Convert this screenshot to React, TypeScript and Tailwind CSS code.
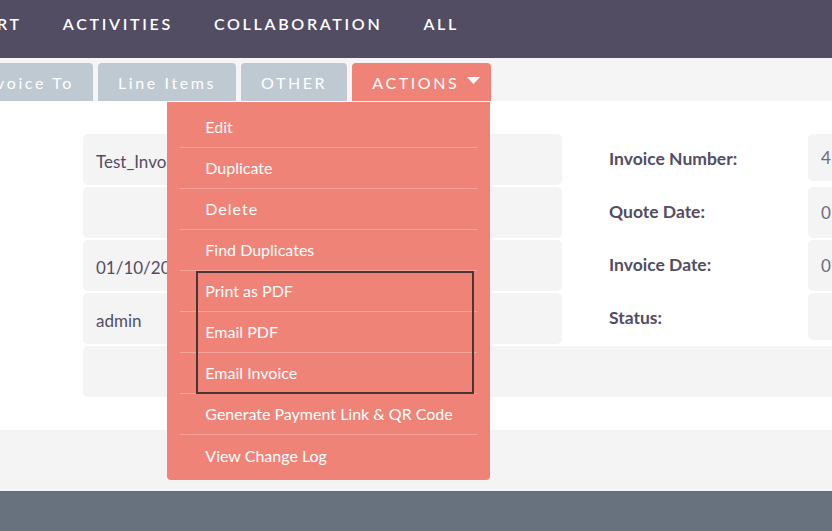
import React from 'react';

const navItems = ['RT', 'ACTIVITIES', 'COLLABORATION', 'ALL'];

const actions = [
  'Edit',
  'Duplicate',
  'Delete',
  'Find Duplicates',
  'Print as PDF',
  'Email PDF',
  'Email Invoice',
  'Generate Payment Link & QR Code',
  'View Change Log',
];

const rows = [
  { value: 'Test_Invoice', label: 'Invoice Number:', right: '4', short: true },
  { value: '', label: 'Quote Date:', right: '01/10/2024', short: false },
  { value: '01/10/2024', label: 'Invoice Date:', right: '01/10/2024', short: false },
  { value: 'admin', label: 'Status:', right: '', short: true },
];

export default function App() {
  return (
    <div className="relative w-[832px] h-[531px] overflow-hidden bg-white font-['Lato','Noto_Sans',sans-serif]">
      {/* top nav */}
      <div className="h-[58px] bg-[#534d64] flex items-center -ml-[3px] gap-[41px] pb-[10px]">
        {navItems.map((item) => (
          <span key={item} className="text-white text-[16px] font-semibold tracking-[2.7px] whitespace-nowrap">
            {item}
          </span>
        ))}
      </div>

      {/* tabs */}
      <div className="h-[43px] bg-[#f5f5f5] flex items-end gap-[5px]">
        <div className="w-[93px] h-[38px] overflow-hidden flex justify-end items-center pt-[2px] pr-[19px] bg-[#bfc9d1] rounded-tr-[4px]">
          <span className="whitespace-nowrap text-white text-[16px] tracking-[2.6px]">Invoice To</span>
        </div>
        <div className="h-[38px] px-[20px] pt-[2px] flex items-center bg-[#bfc9d1] rounded-t-[4px]">
          <span className="whitespace-nowrap text-white text-[16px] tracking-[2.6px]">Line Items</span>
        </div>
        <div className="h-[38px] px-[20px] pt-[2px] flex items-center bg-[#bfc9d1] rounded-t-[4px]">
          <span className="whitespace-nowrap text-white text-[16px] tracking-[2.6px]">OTHER</span>
        </div>
        <div className="relative h-[38px] pl-[20px] pr-[11px] pt-[2px] flex items-center bg-[#f08377] rounded-t-[4px]">
          <span className="whitespace-nowrap text-white text-[16px] tracking-[2.6px]">ACTIONS</span>
          <svg width="13" height="8" viewBox="0 0 13 8" className="ml-[8px] mb-[5px]">
            <polygon points="0,0 13,0 6.5,7" fill="#fff" />
          </svg>

          {/* dropdown */}
          <div className="absolute top-[39px] right-[1px] w-[323px] z-10 bg-[#f08377] rounded-b-[4px] pt-[5px] pb-[4px] px-[13px]">
            {actions.map((a, i) => (
              <div
                key={a}
                className={`h-[41px] flex items-center pl-[25px] text-white text-[16px] ${i < actions.length - 1 ? 'border-b border-[#f5a398]' : ''} ${a === 'Delete' ? 'tracking-[1px]' : ''}`}
              >
                {a}
              </div>
            ))}
          </div>
        </div>
      </div>

      {/* detail content */}
      <div className="pt-[33px] pb-[33px] pl-[83px] flex flex-col gap-[2px]">
        {rows.map((r) => (
          <div key={r.label} className="flex h-[51px]">
            <div className="w-[479px] h-full bg-[#f4f4f4] rounded-[5px] flex items-center pl-[13px] pt-[5px] text-[17px] text-[#534d64] whitespace-nowrap overflow-hidden">
              {r.value}
            </div>
            <div className="w-[246px] pl-[47px] flex items-center font-bold text-[17.5px] text-[#534d64] whitespace-nowrap">
              {r.label}
            </div>
            <div
              className={`flex-1 bg-[#f4f4f4] rounded-l-[5px] flex items-center pl-[13px] text-[17px] text-[#6f6a7c] whitespace-nowrap overflow-hidden ${r.short ? 'h-[47px]' : 'h-full'}`}
            >
              {r.right}
            </div>
          </div>
        ))}
        <div className="h-[51px] bg-[#f4f4f4] rounded-l-[5px]" />
      </div>

      <div className="h-[61px] bg-[#f4f4f4]" />
      <div className="h-[40px] bg-[#67727e]" />

      {/* highlight annotation */}
      <div className="absolute left-[196px] top-[271px] w-[278px] h-[123px] border-2 border-[#4a3434] z-20 pointer-events-none" />
    </div>
  );
}
